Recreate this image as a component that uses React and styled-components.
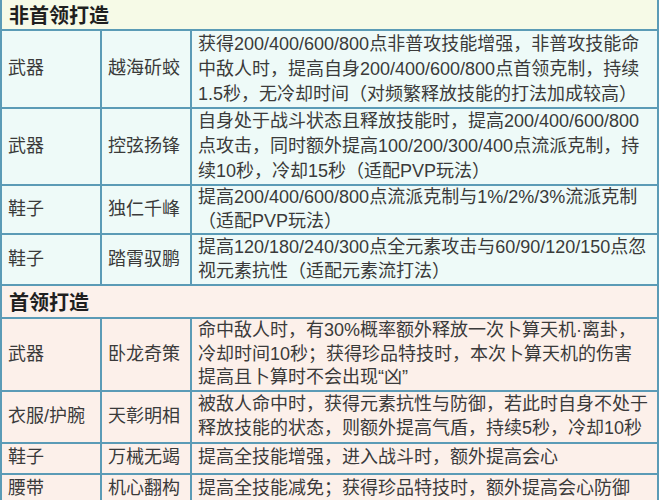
import styled, { createGlobalStyle } from 'styled-components'

const Global = createGlobalStyle`
  html, body { margin: 0; padding: 0; background: #ffffff; }
  body { overflow: hidden; }
`

const Wrap = styled.div`
  width: 660px;
  margin-top: -2px;
`

const Table = styled.table`
  width: 659px;
  border-collapse: collapse;
  table-layout: fixed;
  font-family: "Liberation Sans", "Noto Sans CJK SC", sans-serif;
  color: #3a3a3a;
`

const Row = styled.tr`
  height: ${({ $h }) => $h}px;
  background: ${({ $boss }) => ($boss ? '#fcf0ea' : '#eefaf8')};
`

const SectionCell = styled.td`
  border: 2px solid #5b9bb6;
  background: ${({ $boss }) => ($boss ? '#fcf1eb' : '#f6fae7')};
  font-family: "Noto Sans CJK SC", sans-serif;
  font-weight: 700;
  font-size: 20px;
  color: #1f1f1f;
  padding: 0 7px;
  line-height: 26px;
`

const Cell = styled.td`
  border: 2px solid #5b9bb6;
  font-size: 18px;
  line-height: ${({ $lh }) => $lh || 23.5}px;
  padding: 0 6px;
  vertical-align: middle;
  white-space: nowrap;
  overflow: hidden;
`

const Line = styled.div``

const sections = [
  {
    title: '非首领打造',
    boss: false,
    h: 31,
    rows: [
      {
        slot: '武器',
        name: '越海斫蛟',
        h: 78,
        lh: 25,
        lines: [
          '获得200/400/600/800点非普攻技能增强，非普攻技能命',
          '中敌人时，提高自身200/400/600/800点首领克制，持续',
          '1.5秒，无冷却时间（对频繁释放技能的打法加成较高）',
        ],
      },
      {
        slot: '武器',
        name: '控弦扬锋',
        h: 77,
        lh: 25,
        lines: [
          '自身处于战斗状态且释放技能时，提高200/400/600/800',
          '点攻击，同时额外提高100/200/300/400点流派克制，持',
          '续10秒，冷却15秒（适配PVP玩法）',
        ],
      },
      {
        slot: '鞋子',
        name: '独仁千峰',
        h: 49,
        lines: ['提高200/400/600/800点流派克制与1%/2%/3%流派克制', '（适配PVP玩法）'],
      },
      {
        slot: '鞋子',
        name: '踏霄驭鹏',
        h: 51,
        lines: [
          '提高120/180/240/300点全元素攻击与60/90/120/150点忽',
          '视元素抗性（适配元素流打法）',
        ],
      },
    ],
  },
  {
    title: '首领打造',
    boss: true,
    h: 33,
    rows: [
      {
        slot: '武器',
        name: '卧龙奇策',
        h: 72,
        lines: [
          '命中敌人时，有30%概率额外释放一次卜算天机·离卦，',
          '冷却时间10秒；获得珍品特技时，本次卜算天机的伤害',
          '提高且卜算时不会出现“凶”',
        ],
      },
      {
        slot: '衣服/护腕',
        name: '天彰明相',
        h: 52,
        lines: [
          '被敌人命中时，获得元素抗性与防御，若此时自身不处于',
          '释放技能的状态，则额外提高气盾，持续5秒，冷却10秒',
        ],
      },
      {
        slot: '鞋子',
        name: '万械无竭',
        h: 31,
        lines: ['提高全技能增强，进入战斗时，额外提高会心'],
      },
      {
        slot: '腰带',
        name: '机心翻构',
        h: 31,
        lines: ['提高全技能减免；获得珍品特技时，额外提高会心防御'],
      },
    ],
  },
]

export default function App() {
  return (
    <Wrap>
      <Global />
      <Table>
        <colgroup>
          <col style={{ width: 100 }} />
          <col style={{ width: 90 }} />
          <col />
        </colgroup>
        <tbody>
          {sections.map(s => [
            <Row key={s.title} $h={s.h} $boss={s.boss}>
              <SectionCell colSpan={3} $boss={s.boss}>{s.title}</SectionCell>
            </Row>,
            ...s.rows.map(r => (
              <Row key={r.name} $h={r.h} $boss={s.boss}>
                <Cell>{r.slot}</Cell>
                <Cell>{r.name}</Cell>
                <Cell $lh={r.lh}>
                  {r.lines.map((l, i) => (
                    <Line key={i}>{l}</Line>
                  ))}
                </Cell>
              </Row>
            )),
          ])}
        </tbody>
      </Table>
    </Wrap>
  )
}
